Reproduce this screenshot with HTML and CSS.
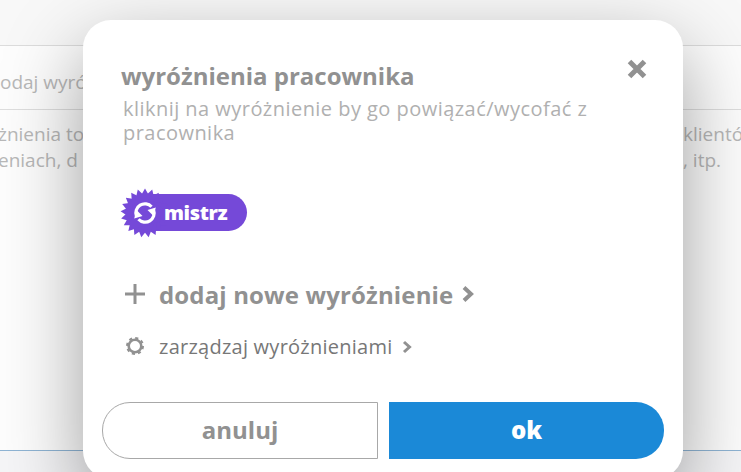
FILE: index.html
```html
<!DOCTYPE html>
<html lang="pl">
<head>
  <meta charset="UTF-8">
  <meta name="viewport" content="width=device-width, initial-scale=1">
  <title>wyróżnienia pracownika</title>
  <link rel="stylesheet" href="styles.css">
</head>
<body>
  <div class="page">
    <div class="page-top"></div>
    <div class="page-row">odaj wyró</div>
    <div class="page-info">
      <div class="info-left">żnienia to<br>eniach, d</div>
      <div class="info-right">klientó<br>, itp.</div>
    </div>
    <div class="page-bottom"></div>
  </div>

  <div class="overlay">
    <div class="modal">
      <div class="modal-header">
        <div>
          <h2>wyróżnienia pracownika</h2>
          <p>kliknij na wyróżnienie by go powiązać/wycofać z<br>pracownika</p>
        </div>
        <svg class="close" width="20" height="20" viewBox="0 0 20 20">
          <path d="M2.5 2.5L17.5 17.5M17.5 2.5L2.5 17.5" />
        </svg>
      </div>

      <div class="badge">
        <svg class="badge-icon" width="50" height="50" viewBox="-25 -25 50 50">
          <defs><path id="tri" d="M0 -24.5L21.2 12.25H-21.2Z" /></defs>
          <g class="star">
            <use href="#tri" />
            <use href="#tri" transform="rotate(17.14)" />
            <use href="#tri" transform="rotate(34.28)" />
            <use href="#tri" transform="rotate(51.43)" />
            <use href="#tri" transform="rotate(68.57)" />
            <use href="#tri" transform="rotate(85.71)" />
            <use href="#tri" transform="rotate(102.86)" />
          </g>
          <g class="arrows">
            <path d="M-8.6 3A9 9 0 0 1 6.5 -6.2M8.6 -3A9 9 0 0 1 -6.5 6.2" />
            <path class="tip" d="M10.8 -5.5L8.5 3L2.5 -3Z" />
            <path class="tip" d="M-10.8 5.5L-8.5 -3L-2.5 3Z" />
          </g>
        </svg>
        <span>mistrz</span>
      </div>

      <div class="action action-add">
        <svg class="icon-plus" width="26" height="22" viewBox="0 0 26 22">
          <path d="M13 1V21M3 11H23" />
        </svg>
        <span class="label">dodaj nowe wyróżnienie</span>
        <svg class="chevron" width="12" height="18" viewBox="0 0 12 18">
          <path d="M2 2.5L9 9L2 15.5" />
        </svg>
      </div>

      <div class="action action-manage">
        <svg class="icon-gear" width="26" height="20" viewBox="-13 -10 26 20">
          <circle r="6.3" />
          <circle class="teeth" r="8" />
        </svg>
        <span class="label">zarządzaj wyróżnieniami</span>
        <svg class="chevron" width="10" height="14" viewBox="0 0 10 14">
          <path d="M2 2L7.5 7L2 12" />
        </svg>
      </div>

      <div class="buttons">
        <button class="btn btn-cancel">anuluj</button>
        <button class="btn btn-ok">ok</button>
      </div>
    </div>
  </div>
</body>
</html>
```

FILE: styles.css
```css
* {
  box-sizing: border-box;
}

body {
  margin: 0;
  height: 472px;
  overflow: hidden;
  background: #fdfdfd;
  font-family: "Open Sans", "Noto Sans", sans-serif;
}

h2, p {
  margin: 0;
}

svg {
  display: block;
  fill: none;
}

.page {
  display: flex;
  flex-direction: column;
  height: 472px;
  color: #b8b8b8;
  font-size: 19px;
}

.page-top {
  height: 46px;
  background: #f8f8f8;
  border-bottom: 1px solid #dcdcdc;
}

.page-row {
  height: 64px;
  line-height: 73px;
  border-bottom: 1px solid #dedede;
}

.page-info {
  display: flex;
  justify-content: space-between;
  height: 341px;
  padding-top: 11px;
  line-height: 26px;
  border-bottom: 1px solid #8fb4d4;
}

.info-left {
  margin-left: -2px;
}

.info-right {
  width: 58px;
  white-space: nowrap;
}

.page-bottom {
  flex: 1;
  background: #f5f5f7;
}

.overlay {
  position: absolute;
  inset: 0;
  display: flex;
  justify-content: center;
  align-items: flex-start;
  padding: 20px 0 0 25px;
  overflow: hidden;
}

.modal {
  flex: none;
  width: 600px;
  height: 459px;
  padding: 38px 19px 0;
  background: #fff;
  border-radius: 28px;
  box-shadow: 0 30px 80px rgba(0, 0, 0, 0.38);
}

.modal-header {
  display: flex;
  justify-content: space-between;
  height: 135px;
  padding: 0 17px 0 19px;
}

.modal-header h2 {
  color: #919191;
  font-size: 24px;
  font-weight: 700;
  line-height: 35px;
  white-space: nowrap;
}

.modal-header p {
  padding: 4px 0 0 2px;
  color: #b0b0b0;
  font-size: 20px;
  line-height: 24px;
  letter-spacing: 0.46px;
  white-space: nowrap;
}

.close {
  margin-top: 1px;
  stroke: #919191;
  stroke-width: 5;
}

.badge {
  display: flex;
  align-items: center;
  width: 103px;
  height: 37px;
  margin: 1px 0 0 42px;
  color: #fff;
  background: #7549d8;
  border-radius: 0 19px 19px 0;
  font-size: 20px;
  font-weight: 800;
  letter-spacing: -0.4px;
}

.badge-icon {
  flex: none;
  margin: 0 -6px 0 -24px;
}

.star {
  fill: #7549d8;
}

.arrows {
  stroke: #fff;
  stroke-width: 3.2;
}

.tip {
  fill: #fff;
  stroke: none;
}

.action {
  display: flex;
  align-items: center;
  padding-left: 20px;
  color: #919191;
  stroke: #919191;
}

.action .label {
  stroke: none;
  white-space: nowrap;
}

.action-add {
  height: 40px;
  margin-top: 43px;
  font-size: 24px;
  font-weight: 700;
  letter-spacing: 0.15px;
}

.icon-plus {
  stroke-width: 3;
  margin-right: 11px;
}

.action-add .chevron {
  margin-left: 9px;
  stroke-width: 4;
}

.action-manage {
  height: 30px;
  margin-top: 17px;
  color: #777;
  font-size: 20px;
  letter-spacing: 0.25px;
}

.icon-gear {
  margin-right: 11px;
  stroke-width: 2.6;
}

.icon-gear .teeth {
  stroke-width: 2;
  stroke-dasharray: 3.14 3.14;
}

.action-manage .chevron {
  margin: 2px 0 0 9px;
  stroke-width: 3;
}

.buttons {
  display: flex;
  gap: 11px;
  margin-top: 41px;
}

.btn {
  height: 57px;
  padding: 0 0 2px;
  font-family: inherit;
  font-size: 24px;
  font-weight: 700;
}

.btn-cancel {
  width: 276px;
  color: #919191;
  background: #fff;
  border: 1px solid #a8a8a8;
  border-radius: 28px 0 0 28px;
}

.btn-ok {
  width: 275px;
  color: #fff;
  background: #1b89d7;
  border: 0;
  border-radius: 0 28px 28px 0;
  font-weight: 800;
}
```
